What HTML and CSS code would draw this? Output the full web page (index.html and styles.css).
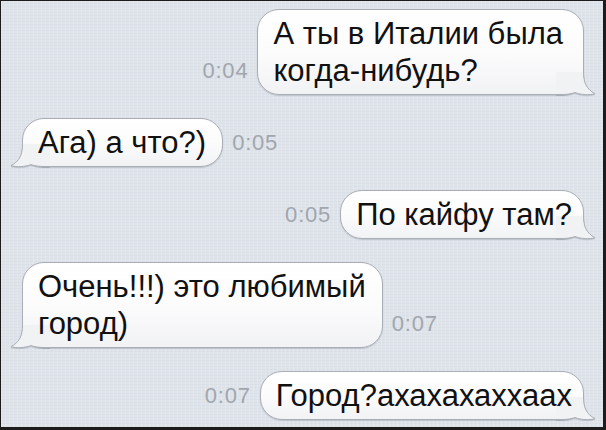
FILE: index.html
```html
<!DOCTYPE html>
<html lang="ru">
<head>
    <meta charset="UTF-8">
    <meta name="viewport" content="width=device-width, initial-scale=1.0">
    <title>Сообщения</title>
    <link rel="stylesheet" href="styles.css">
</head>
<body>
    <div class="chat">
        <div class="row out">
            <span class="time">0:04</span>
            <div class="bubble roomy">
                <svg class="tail" viewBox="0 0 40 26" width="40" height="26"><path class="tail-fill" d="M0,3 H27.5 C27.5,13 30,20 39,24.6 C33,26.4 25,25.8 19,23.6 C15,25 11,25.5 6,25.5 H0 Z"/><path class="tail-line" d="M27.5,3 C27.5,13 30,20 39,24.6 C33,26.4 25,25.8 19,23.6 C15,25 11,25.5 6,25.5 H0"/></svg>
                <span class="text">А ты в Италии была<br>когда-нибудь?</span>
            </div>
        </div>
        <div class="row in">
            <div class="bubble">
                <svg class="tail" viewBox="0 0 40 26" width="40" height="26"><path class="tail-fill" d="M0,3 H27.5 C27.5,13 30,20 39,24.6 C33,26.4 25,25.8 19,23.6 C15,25 11,25.5 6,25.5 H0 Z"/><path class="tail-line" d="M27.5,3 C27.5,13 30,20 39,24.6 C33,26.4 25,25.8 19,23.6 C15,25 11,25.5 6,25.5 H0"/></svg>
                <span class="text">Ага) а что?)</span>
            </div>
            <span class="time">0:05</span>
        </div>
        <div class="row out">
            <span class="time">0:05</span>
            <div class="bubble">
                <svg class="tail" viewBox="0 0 40 26" width="40" height="26"><path class="tail-fill" d="M0,3 H27.5 C27.5,13 30,20 39,24.6 C33,26.4 25,25.8 19,23.6 C15,25 11,25.5 6,25.5 H0 Z"/><path class="tail-line" d="M27.5,3 C27.5,13 30,20 39,24.6 C33,26.4 25,25.8 19,23.6 C15,25 11,25.5 6,25.5 H0"/></svg>
                <span class="text">По кайфу там?</span>
            </div>
        </div>
        <div class="row in">
            <div class="bubble">
                <svg class="tail" viewBox="0 0 40 26" width="40" height="26"><path class="tail-fill" d="M0,3 H27.5 C27.5,13 30,20 39,24.6 C33,26.4 25,25.8 19,23.6 C15,25 11,25.5 6,25.5 H0 Z"/><path class="tail-line" d="M27.5,3 C27.5,13 30,20 39,24.6 C33,26.4 25,25.8 19,23.6 C15,25 11,25.5 6,25.5 H0"/></svg>
                <span class="text">Очень!!!) это любимый<br>город)</span>
            </div>
            <span class="time">0:07</span>
        </div>
        <div class="row out">
            <span class="time">0:07</span>
            <div class="bubble">
                <svg class="tail" viewBox="0 0 40 26" width="40" height="26"><path class="tail-fill" d="M0,3 H27.5 C27.5,13 30,20 39,24.6 C33,26.4 25,25.8 19,23.6 C15,25 11,25.5 6,25.5 H0 Z"/><path class="tail-line" d="M27.5,3 C27.5,13 30,20 39,24.6 C33,26.4 25,25.8 19,23.6 C15,25 11,25.5 6,25.5 H0"/></svg>
                <span class="text">Город?ахахахаххаах</span>
            </div>
        </div>
    </div>
</body>
</html>
```

FILE: styles.css
```css
html, body {
    margin: 0;
    padding: 0;
}
body {
    inline-size: 606px;
    block-size: 430px;
    overflow: hidden;
    font-family: "Liberation Sans", Arial, sans-serif;
}
.chat {
    box-sizing: border-box;
    inline-size: 606px;
    block-size: 430px;
    border-style: solid;
    border-color: #1c1c1c;
    border-width: 1px 3px 3px 1px;
    padding: 8px 19px 0 21px;
    display: flex;
    flex-direction: column;
    gap: 23px;
    background-color: #dfe3ea;
    /* faint linen texture */
    background-image:
        repeating-linear-gradient(90deg, rgba(255, 255, 255, 0.18) 0 1px, transparent 1px 4px),
        repeating-linear-gradient(0deg, rgba(160, 168, 182, 0.08) 0 1px, transparent 1px 3px);
}
.row {
    display: flex;
    align-items: flex-end;
    gap: 9px;
}
.row.out {
    justify-content: flex-end;
}
.row.in {
    justify-content: flex-start;
}
.bubble {
    position: relative;
    font-size: 31px;
    line-height: 37px;
    color: #111;
    padding: 5px 11px 5px 15px;
    border: 1px solid #a9aeb6;
    border-radius: 22px;
    background: linear-gradient(#ffffff 0%, #fbfbfc 55%, #f1f2f4 100%);
    box-shadow: 0 1px 1px rgba(90, 98, 112, 0.25);
}
.bubble.roomy {
    padding-inline-end: 20px;
}
.in .bubble {
    padding: 5px 16px 5px 15px;
}
.text {
    position: relative;
}
.time {
    font-size: 22px;
    line-height: 37px;
    margin-block-end: 6px;
    color: #a1a6ad;
    letter-spacing: 0.8px;
}
.tail {
    position: absolute;
    inset-block-end: -1px;
    inset-inline-end: -13px;
    overflow: visible;
    filter: drop-shadow(0 1px 0.5px rgba(90, 98, 112, 0.25));
}
.in .tail {
    inset-inline-end: auto;
    inset-inline-start: -13px;
    transform: scaleX(-1);
}
.tail-fill {
    fill: #f1f2f4;
}
.tail-line {
    fill: none;
    stroke: #a9aeb6;
    stroke-width: 1;
}
```
